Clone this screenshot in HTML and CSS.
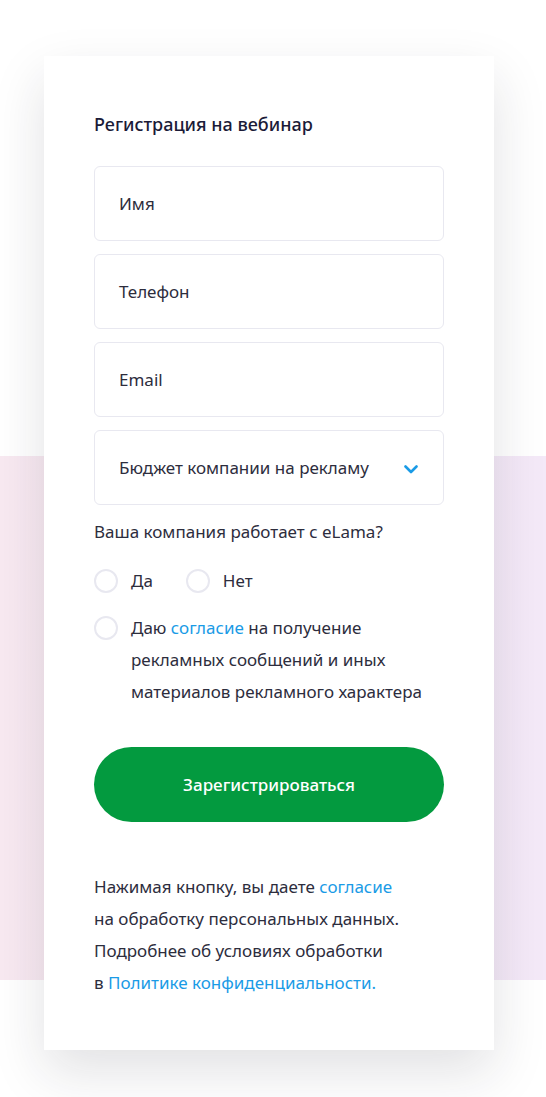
FILE: index.html
```html
<!DOCTYPE html>
<html lang="ru">
<head>
<meta charset="utf-8">
<link rel="stylesheet" href="styles.css">
</head>
<body>
<main class="page">
  <form class="card">
    <h1 class="title">Регистрация на вебинар</h1>
    <div class="fields">
      <div class="field">Имя</div>
      <div class="field">Телефон</div>
      <div class="field">Email</div>
      <div class="field select">
        <span>Бюджет компании на рекламу</span>
        <svg class="chev" width="14" height="9" viewBox="0 0 14 9"><path d="M1.5 1.5 L7 7 L12.5 1.5" fill="none" stroke="#1a9be6" stroke-width="2.6" stroke-linecap="round" stroke-linejoin="round"/></svg>
      </div>
    </div>
    <p class="question">Ваша компания работает с eLama?</p>
    <div class="radios">
      <label class="radio"><span class="circle"></span>Да</label>
      <label class="radio"><span class="circle"></span>Нет</label>
    </div>
    <label class="consent"><span class="circle"></span><span class="consent-text">Даю <a class="link">согласие</a> на получение<br>рекламных сообщений и иных<br>материалов рекламного характера</span></label>
    <button class="btn" type="button">Зарегистрироваться</button>
    <p class="note">Нажимая кнопку, вы даете <a class="link">согласие</a><br>на обработку персональных данных.<br>Подробнее об условиях обработки<br>в <a class="link">Политике конфиденциальности.</a></p>
  </form>
</main>
</body>
</html>
```

FILE: styles.css
```css
* { box-sizing: border-box; }
html, body { margin: 0; padding: 0; }
body {
  font-family: "Noto Sans", "Open Sans", sans-serif;
  color: #2d2d3d;
  background-color: #ffffff;
  background-image: linear-gradient(to right, #f8e9f1, #f4e9f8);
  background-size: 100% 524px;
  background-position: 0 456px;
  background-repeat: no-repeat;
  min-height: 1097px;
}
.page {
  padding: 56px 0 0 44px;
  display: flex;
}
.card {
  width: 450px;
  height: 994px;
  flex: none;
  background: #fff;
  box-shadow: 0 22px 50px rgba(30, 30, 50, 0.13);
  padding: 55px 50px 0 50px;
  display: flex;
  flex-direction: column;
}
.card > * { flex: none; }
.title {
  margin: 0;
  font-size: 18px;
  font-weight: 500;
  line-height: 26px;
  color: #1b1b38;
}
.fields {
  margin-top: 29px;
  display: flex;
  flex-direction: column;
  gap: 13px;
}
.field {
  height: 75px;
  border: 1px solid #e8e8f0;
  border-radius: 6px;
  padding: 0 24px;
  display: flex;
  align-items: center;
  font-size: 17px;
  color: #2d2d3d;
}
.select { justify-content: space-between; }
.chev { margin-right: 1px; margin-top: 3px; }
.question {
  margin: 15px 0 0 0;
  font-size: 17px;
  line-height: 24px;
}
.radios {
  margin-top: 25px;
  display: flex;
  gap: 33px;
}
.radio {
  display: flex;
  align-items: center;
  gap: 13px;
  font-size: 17px;
  line-height: 24px;
}
.circle {
  width: 24px;
  height: 24px;
  border: 2px solid #e8e8f0;
  border-radius: 50%;
  flex: none;
}
.consent {
  margin-top: 19px;
  display: flex;
  gap: 13px;
  align-items: flex-start;
}
.consent .circle { margin-top: 4px; }
.consent-text {
  font-size: 17px;
  line-height: 32px;
}
.link { color: #1a9be6; text-decoration: none; }
.btn {
  margin-top: 39px;
  height: 75px;
  border: 0;
  border-radius: 38px;
  background: #039a3f;
  color: #fff;
  font-family: inherit;
  font-size: 17px;
  font-weight: 500;
}
.note {
  margin: 49px 0 0 0;
  font-size: 17px;
  line-height: 32px;
}
```
